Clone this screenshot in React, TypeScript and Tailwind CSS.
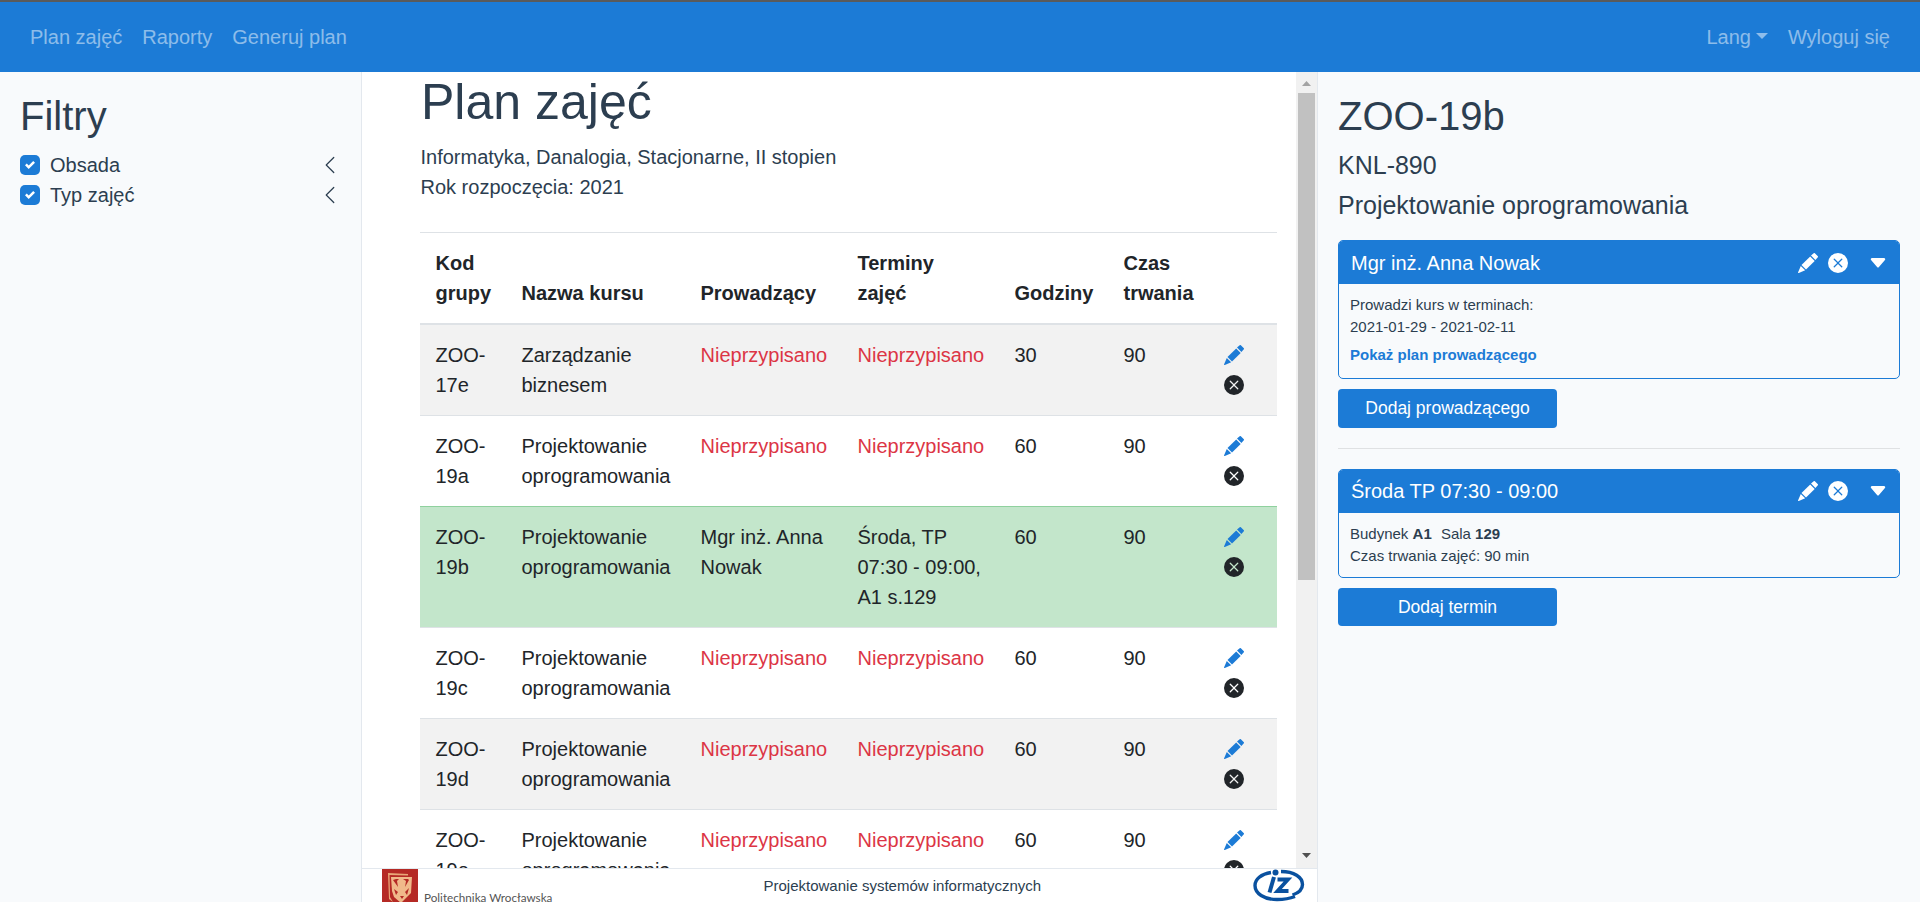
import { Fragment, type ReactNode } from "react";
import { BsXCircleFill, BsCaretDownFill, BsChevronLeft } from "react-icons/bs";

type Group = {
  code: string[];
  course: string[];
  teacher?: string[];
  slots?: string[];
  hours: number;
  duration: number;
  selected?: boolean;
};

const software = ["Projektowanie", "oprogramowania"];

const groups: Group[] = [
  { code: ["ZOO-", "17e"], course: ["Zarządzanie", "biznesem"], hours: 30, duration: 90 },
  { code: ["ZOO-", "19a"], course: software, hours: 60, duration: 90 },
  {
    code: ["ZOO-", "19b"],
    course: software,
    teacher: ["Mgr inż. Anna", "Nowak"],
    slots: ["Środa, TP", "07:30 - 09:00,", "A1 s.129"],
    hours: 60,
    duration: 90,
    selected: true,
  },
  { code: ["ZOO-", "19c"], course: software, hours: 60, duration: 90 },
  { code: ["ZOO-", "19d"], course: software, hours: 60, duration: 90 },
  { code: ["ZOO-", "19e"], course: software, hours: 60, duration: 90 },
];

const headers = [
  ["Kod", "grupy"],
  ["Nazwa kursu"],
  ["Prowadzący"],
  ["Terminy", "zajęć"],
  ["Godziny"],
  ["Czas", "trwania"],
  [""],
];

function Lines({ items }: { items: string[] }) {
  return (
    <>
      {items.map((t, i) => (
        <Fragment key={i}>
          {i > 0 && <br />}
          {t}
        </Fragment>
      ))}
    </>
  );
}

function Pencil({ className = "" }: { className?: string }) {
  return (
    <svg viewBox="0 0 20 20" fill="currentColor" className={"size-5 shrink-0 " + className}>
      <path d="M15.4.4a1.2 1.2 0 0 1 1.7 0l2.500 2.500a1.2 1.2 0 0 1 0 1.700L17.400 7 13 2.600z" />
      <path d="M12.200 3.400l4.500 4.500-8.700 8.700-4.500-4.500z" />
      <path d="M2.800 12.900l4.400 4.400L.8 19.900a.5.5 0 0 1-.7-.7z" />
    </svg>
  );
}

function Unassigned() {
  return <span className="text-[#dc3545]">Nieprzypisano</span>;
}

function Navbar() {
  return (
    <nav className="flex h-[72px] shrink-0 items-center justify-between border-t-2 border-[#5a5a5a] bg-[#1c7bd6] px-[30px] text-white/50">
      <div className="flex gap-5">
        <a>Plan zajęć</a>
        <a>Raporty</a>
        <a>Generuj plan</a>
      </div>
      <div className="flex gap-5">
        <a className="flex items-center gap-[5px]">
          Lang
          <svg width="12" height="6" viewBox="0 0 12 6" fill="currentColor" className="-mt-0.5">
            <path d="M0 0h12L6 6z" />
          </svg>
        </a>
        <a>Wyloguj się</a>
      </div>
    </nav>
  );
}

function Filter({ label }: { label: string }) {
  return (
    <label className="flex h-[30px] items-center">
      <span className="flex size-5 items-center justify-center rounded-[5px] bg-[#1c7bd6]">
        <svg width="10" height="10" viewBox="0 0 8 8" fill="#fff">
          <path d="M6.564.75l-3.59 3.612-1.538-1.55L0 4.26l2.974 2.99L8 2.193z" />
        </svg>
      </span>
      <span className="ml-2.5 grow">{label}</span>
      <BsChevronLeft className="mr-[1px] size-5" />
    </label>
  );
}

function Scrollbar() {
  return (
    <div className="flex w-[21px] shrink-0 flex-col items-center bg-[#f1f1f1]">
      <div className="flex h-[21px] items-center pt-[2px]">
        <svg width="9" height="5" viewBox="0 0 9 5" fill="#a3a3a3">
          <path d="M0 5h9L4.5 0z" />
        </svg>
      </div>
      <div className="h-[487px] w-[17px] bg-[#c1c1c1]" />
      <div className="grow" />
      <div className="flex h-[23px] items-start pt-[8px]">
        <svg width="9" height="5" viewBox="0 0 9 5" fill="#505050">
          <path d="M0 0h9L4.5 5z" />
        </svg>
      </div>
    </div>
  );
}

function rowTone(g: Group, i: number) {
  if (g.selected) return "bg-[#c3e6cb]";
  return i % 2 === 0 ? "bg-[#f2f2f2]" : "bg-white";
}

function cellTone(g: Group, i: number) {
  const base = "py-[15px] pr-[14px] pl-[15.5px] ";
  if (i === 0) return base;
  return base + (g.selected ? "border-t border-[#8fd19e]" : "border-t border-[#dee2e6]");
}

function ScheduleTable() {
  return (
    <table className="mt-[30px] w-[857px] table-fixed border-separate border-spacing-0 text-left text-[#212529]">
      <colgroup>
        <col className="w-[86px]" />
        <col className="w-[179px]" />
        <col className="w-[157px]" />
        <col className="w-[157px]" />
        <col className="w-[109px]" />
        <col className="w-[101px]" />
        <col className="w-[68px]" />
      </colgroup>
      <thead>
        <tr>
          {headers.map((h, i) => (
            <th
              key={i}
              className="border-t border-b-2 border-[#dee2e6] py-[15px] pr-[14px] pl-[15.5px] align-bottom font-bold whitespace-nowrap"
            >
              <Lines items={h} />
            </th>
          ))}
        </tr>
      </thead>
      <tbody>
        {groups.map((g, i) => {
          const cell = cellTone(g, i);
          return (
            <tr key={i} className={"align-top whitespace-nowrap " + rowTone(g, i)}>
              <td className={cell}><Lines items={g.code} /></td>
              <td className={cell}><Lines items={g.course} /></td>
              <td className={cell}>{g.teacher ? <Lines items={g.teacher} /> : <Unassigned />}</td>
              <td className={cell}>{g.slots ? <Lines items={g.slots} /> : <Unassigned />}</td>
              <td className={cell}>{g.hours}</td>
              <td className={cell}>{g.duration}</td>
              <td className={cell}>
                <div className="-ml-[0.5px] flex flex-col gap-2.5 py-[5px]">
                  <Pencil className="text-[#1c7bd6]" />
                  <BsXCircleFill className="size-5" />
                </div>
              </td>
            </tr>
          );
        })}
      </tbody>
    </table>
  );
}

function Footer() {
  return (
    <footer className="flex h-[34px] shrink-0 items-start overflow-hidden border-t border-[#e3e8ee] bg-white pr-[12px] pl-5">
      <div className="flex w-[381.500px] items-start">
        <svg width="36" height="36" viewBox="0 0 36 36" className="shrink-0">
          <rect width="36" height="36" fill="#b52a25" />
          <path d="M6 4l20 1v1.500L7.500 6l.5 22 3 5-4-3z" fill="#e9a878" />
          <path d="M9 8h21l-1 16-8 8-2 2-7-6-2-6z" fill="#f0b98a" />
          <path
            d="M11 11l5 7-1-6 2-2-3 0zM27 11l-4 7 1-6-3-2h5zM12 20l4 3-2 3zM27 19l-4 4 2 3zM18 27l2 3 2-3z"
            fill="#b52a25"
          />
        </svg>
        <span className="mt-[17px] ml-[6px] font-['Lato'] text-[11.7px] leading-[16px] whitespace-nowrap text-[#555]">
          <span className="block pt-[3px]">Politechnika Wrocławska</span>
        </span>
      </div>
      <span className="mt-[6px] grow text-[15px] leading-[22px] whitespace-nowrap text-[#2c3e50]">
        Projektowanie systemów informatycznych
      </span>
      <svg width="52" height="36" viewBox="0 0 52 36" fill="none" stroke="#0a519f" className="shrink-0">
        <path
          d="M18 3.500C8 5 2 10.500 2 16.500c0 8 9 14 22 14 7 0 13-1 18-3M28 2.500C41 2.500 49.500 8 49.500 15.500c0 5-4 8.500-10 10.500"
          strokeWidth="3.400"
        />
        <path d="M21 8l-4.500 15.500" strokeWidth="4" />
        <path d="M24.500 10.500h10.500L24.500 22h11" strokeWidth="3.800" />
        <circle cx="22.500" cy="3.500" r="3" fill="#0a519f" stroke="none" />
      </svg>
    </footer>
  );
}

function Card({
  title,
  tall,
  children,
}: {
  title: string;
  tall?: boolean;
  children: ReactNode;
}) {
  return (
    <section className="overflow-hidden rounded-[5px] border border-[#1c7bd6]">
      <header
        className={
          "flex h-[43px] items-center bg-[#1c7bd6] pr-[11px] pl-3 text-white " +
          (tall ? "" : "pb-[2px]")
        }
      >
        <span className="grow">{title}</span>
        <Pencil />
        <BsXCircleFill className="ml-2.5 size-5" />
        <BsCaretDownFill className="ml-5 size-5" />
      </header>
      <div className="px-[11px] text-[15px] leading-[22px]">{children}</div>
    </section>
  );
}

function Button({ children, tall }: { children: ReactNode; tall?: boolean }) {
  return (
    <button
      className={
        "mt-2.5 flex w-[219px] justify-center rounded-[4px] bg-[#1c7bd6] text-[17.5px] leading-[26px] text-white " +
        (tall ? "h-[39px] pt-[6px]" : "h-[38px] pt-[6px]")
      }
    >
      {children}
    </button>
  );
}

export default function App() {
  return (
    <div className="flex h-[902px] w-[1920px] flex-col overflow-hidden bg-white font-['Liberation_Sans',Arial,sans-serif] text-[20px] leading-[30px] text-[#2c3e50]">
      <Navbar />
      <div className="flex min-h-0 grow">
        <aside className="w-[362px] shrink-0 border-r border-[#e3e8ee] bg-[#f8fafc] px-5 pt-5">
          <h2 className="mb-2.5 text-[40px] leading-[48px]">Filtry</h2>
          <Filter label="Obsada" />
          <Filter label="Typ zajęć" />
        </aside>
        <div className="flex w-[956px] shrink-0 flex-col border-r border-[#e3e8ee]">
          <div className="flex min-h-0 grow overflow-hidden">
            <main className="grow overflow-hidden pl-[58px]">
              <h1 className="mb-2.5 pl-px text-[50px] leading-[60px]">Plan zajęć</h1>
              <p className="pl-[0.5px]">Informatyka, Danalogia, Stacjonarne, II stopien</p>
              <p className="pl-[0.5px]">Rok rozpoczęcia: 2021</p>
              <ScheduleTable />
            </main>
            <Scrollbar />
          </div>
          <Footer />
        </div>
        <aside className="grow bg-[#f8fafc] px-5 pt-5">
          <h2 className="mb-2.5 text-[40px] leading-[48px]">ZOO-19b</h2>
          <h5 className="mb-2.5 text-[25px] leading-[30px]">KNL-890</h5>
          <h5 className="mb-5 text-[25px] leading-[30px]">Projektowanie oprogramowania</h5>
          <Card title="Mgr inż. Anna Nowak" tall>
            <div className="h-[94px] pt-[10px]">
              <p>Prowadzi kurs w terminach:</p>
              <p>2021-01-29 - 2021-02-11</p>
              <a className="mt-[6px] block font-bold text-[#1c7bd6]">Pokaż plan prowadzącego</a>
            </div>
          </Card>
          <Button tall>Dodaj prowadzącego</Button>
          <hr className="my-5 border-t border-[#dfe1e3]" />
          <Card title="Środa TP 07:30 - 09:00">
            <div className="h-[64px] pt-[10px]">
              <p>
                Budynek <b>A1</b> <span className="ml-[5px]">Sala</span> <b>129</b>
              </p>
              <p>Czas trwania zajęć: 90 min</p>
            </div>
          </Card>
          <Button>Dodaj termin</Button>
        </aside>
      </div>
    </div>
  );
}
